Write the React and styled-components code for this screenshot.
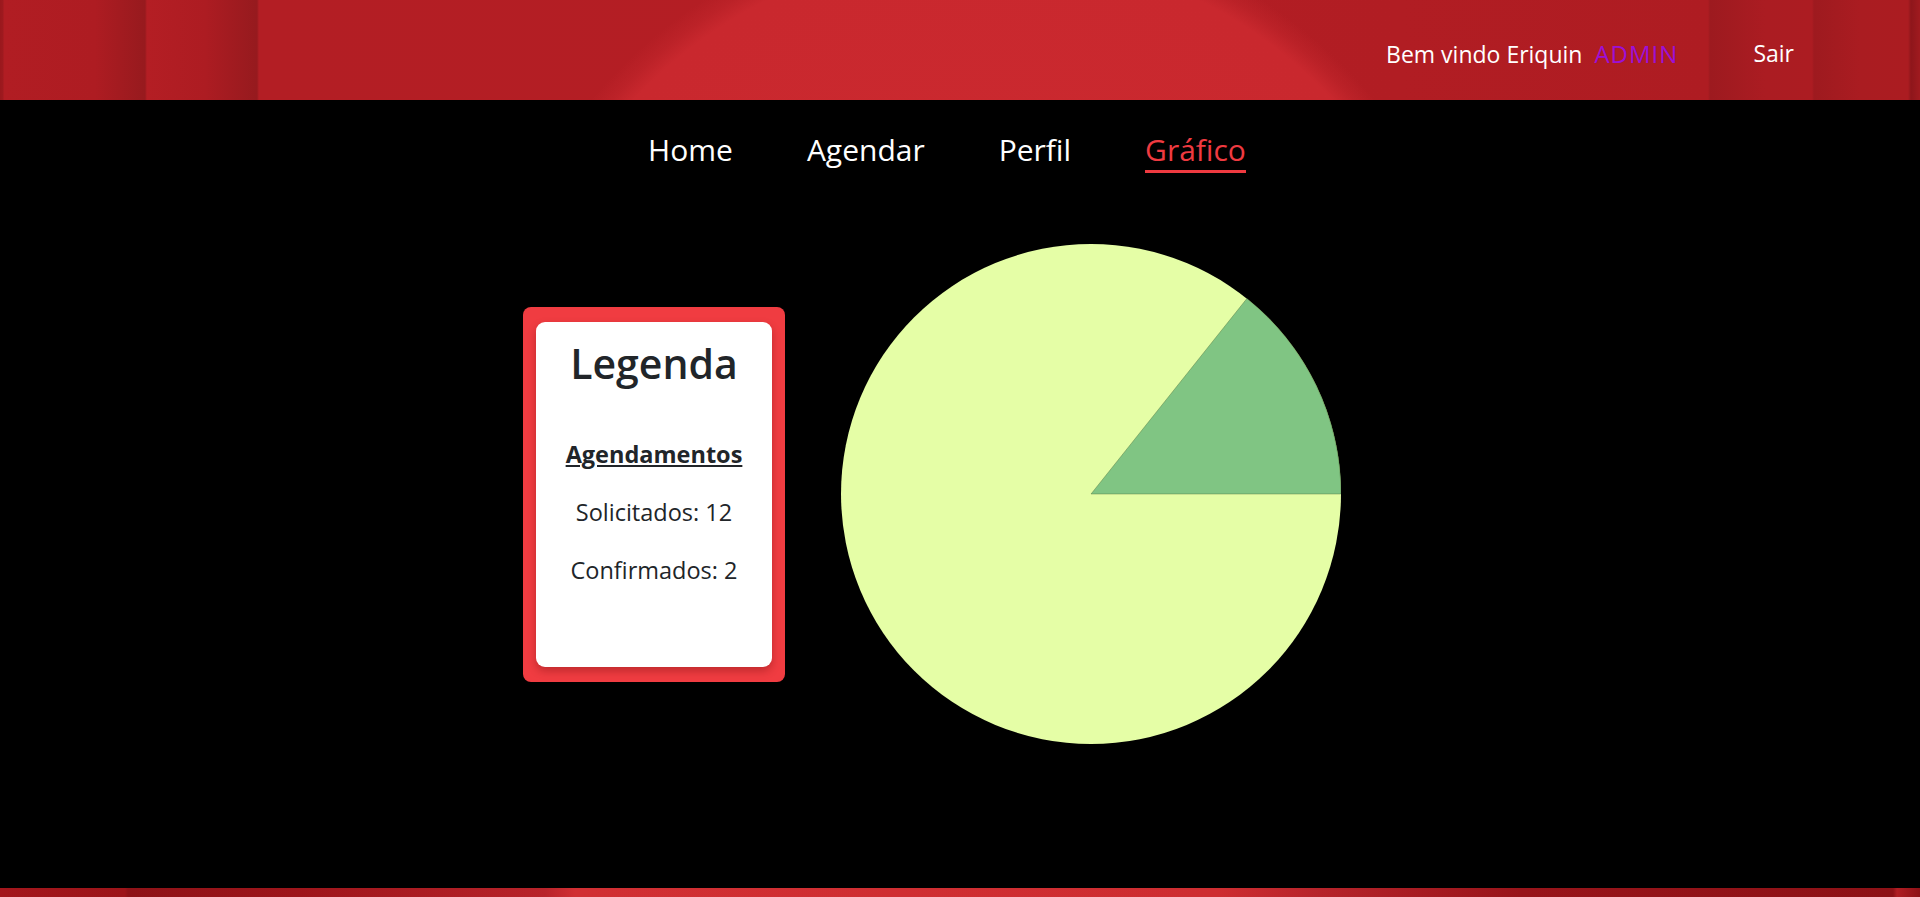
import React from 'react';
import styled, { createGlobalStyle } from 'styled-components';

const GlobalStyle = createGlobalStyle`
  body {
    margin: 0;
    background: #000;
    font-family: "Open Sans", "Noto Sans", sans-serif;
  }
`;

const links = ['Home', 'Agendar', 'Perfil', 'Gráfico'];

const agendamentos = { solicitados: 12, confirmados: 2 };

const PieChart = ({ solicitados, confirmados }) => {
  //Slice of the confirmed ones, drawn from 3 o'clock going up.
  const total = solicitados + confirmados;
  const angle = (confirmados / total) * Math.PI * 2;
  const x = 250 + 250 * Math.cos(angle);
  const y = 250 - 250 * Math.sin(angle);
  return (
    <svg width="500" height="500" viewBox="0 0 500 500">
      <circle cx="250" cy="250" r="250" fill="#e5fea6" />
      <path
        d={`M250 250 L500 250 A250 250 0 0 0 ${x} ${y} Z`}
        fill="#80c583"
        stroke="rgba(60,90,40,0.35)"
        strokeWidth="1"
      />
    </svg>
  );
};

const App = () => {
  return (
    <Page>
      <GlobalStyle />
      <Header>
        <Welcome>
          Bem vindo Eriquin <Role>ADMIN</Role>
        </Welcome>
        <Logout>Sair</Logout>
      </Header>

      <Nav>
        {links.map((link) => (
          <NavLink key={link} $active={link === 'Gráfico'}>{link}</NavLink>
        ))}
      </Nav>

      <Content>
        <Row>
          <Legend>
            <LegendBody>
              <LegendTitle>Legenda</LegendTitle>
              <LegendSection>Agendamentos</LegendSection>
              <LegendItem>Solicitados: {agendamentos.solicitados}</LegendItem>
              <LegendItem>Confirmados: {agendamentos.confirmados}</LegendItem>
            </LegendBody>
          </Legend>
          <PieChart {...agendamentos} />
        </Row>
      </Content>

      <Footer />
    </Page>
  );
};

const Page = styled.div`
  display: flex;
  flex-direction: column;
  background: #000;
`;

const Header = styled.header`
  height: 100px;
  box-sizing: border-box;
  padding: 6px 126px 0 0;
  display: flex;
  align-items: center;
  justify-content: flex-end;
  color: #fff;
  font-size: 23px;
  background:
    radial-gradient(circle 510px at 983px 429px, #cc2a30 0, #c9282e 480px, rgba(196, 38, 44, 0.5) 496px, rgba(190, 36, 42, 0) 512px),
    linear-gradient(
      to right,
      #9a181d 0,
      #9e1a1f 3px,
      #b11d23 4px,
      #ae1c22 95px,
      #971a1e 145px,
      #b41e24 147px,
      #ad1c22 205px,
      #961a1e 257px,
      #b31e24 259px,
      #b41e24 800px,
      #b11d23 1400px,
      #ae1c22 1708px,
      #9d1a1f 1710px,
      #ab1c22 1765px,
      #ac1c22 1812px,
      #9e1a1f 1814px,
      #aa1c21 1860px,
      #ab1c21 1908px,
      #8e161b 1911px,
      #a01a1f 1920px
    );
`;

const Welcome = styled.span`
  white-space: nowrap;
`;

const Role = styled.span`
  margin-left: 6px;
  color: #9c10d6;
  font-size: 24px;
  letter-spacing: 1px;
`;

const Logout = styled.span`
  margin-left: 75px;
  cursor: pointer;
`;

const Nav = styled.nav`
  display: flex;
  justify-content: center;
  gap: 74px;
  padding: 29px 26px 0 0;
`;

const NavLink = styled.a`
  font-size: 30px;
  line-height: 41px;
  color: ${({ $active }) => ($active ? '#ef3a40' : '#fff')};
  border-bottom: 3px solid ${({ $active }) => ($active ? '#ef3a40' : 'transparent')};
  text-decoration: none;
  cursor: pointer;
`;

const Content = styled.main`
  height: 715px;
  box-sizing: border-box;
  padding: 71px 56px 0 0;
`;

const Row = styled.div`
  display: flex;
  justify-content: center;
  align-items: center;
  gap: 56px;
`;

const Legend = styled.div`
  width: 262px;
  box-sizing: border-box;
  padding: 15px 13px;
  background: #f03c41;
  border-radius: 8px;
`;

const LegendBody = styled.div`
  height: 345px;
  box-sizing: border-box;
  padding-top: 17px;
  background: #fff;
  border-radius: 9px;
  box-shadow: 0 4px 8px rgba(80, 0, 0, 0.3);
  text-align: center;
  color: #212529;
`;

const LegendTitle = styled.h1`
  margin: 0 0 51px;
  font-size: 41px;
  font-weight: 600;
  line-height: 48px;
`;

const LegendSection = styled.div`
  font-size: 23.5px;
  font-weight: 700;
  line-height: 33px;
  text-decoration: underline;
  margin-bottom: 25px;
`;

const LegendItem = styled.p`
  margin: 0 0 25px;
  font-size: 23.5px;
  line-height: 33px;
`;

const Footer = styled.footer`
  height: 80px;
  background: linear-gradient(
    to right,
    #a3161c 0,
    #9c1419 125px,
    #8e1217 128px,
    #9e151b 300px,
    #b8232a 545px,
    #d12f33 575px,
    #ce2d31 1218px,
    #b6232a 1320px,
    #98141a 1520px,
    #8d1116 1893px,
    #b01d23 1897px,
    #8d1116 1920px
  );
`;

export default App;
